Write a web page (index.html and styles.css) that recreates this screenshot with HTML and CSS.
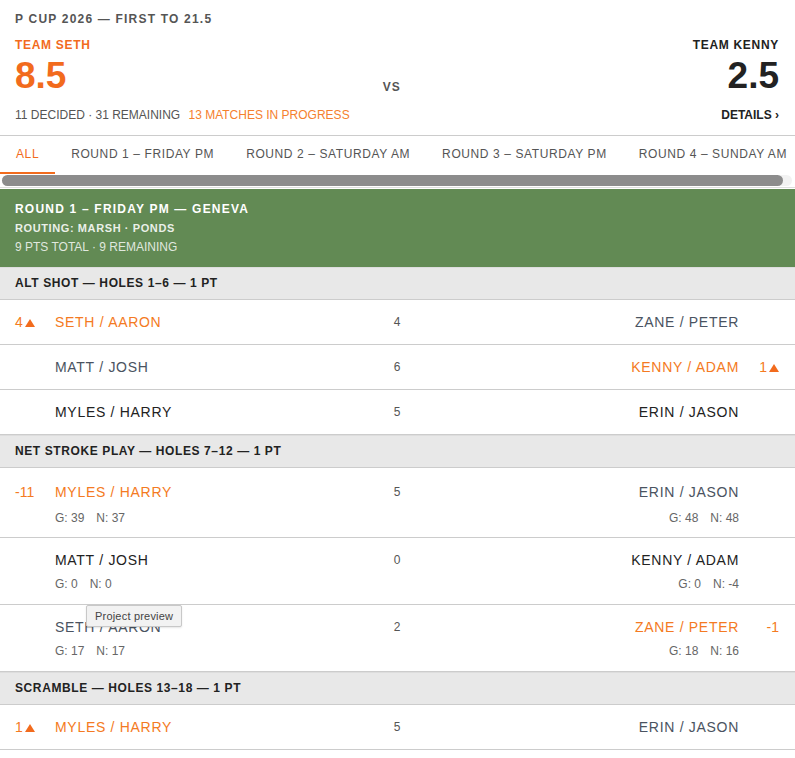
FILE: index.html
```html
<!DOCTYPE html>
<html lang="en">
<head>
    <meta charset="UTF-8">
    <meta name="viewport" content="width=device-width, initial-scale=1.0">
    <title>P Cup 2026</title>
    <link rel="stylesheet" href="styles.css">
</head>
<body>

<!-- Scoreboard -->
<header class="scoreboard">
    <div class="cup-title">P CUP 2026 — FIRST TO 21.5</div>
    <div class="teams">
        <div class="team team-seth">
            <div class="team-name">TEAM SETH</div>
            <div class="team-score">8.5</div>
        </div>
        <div class="vs">VS</div>
        <div class="team team-kenny">
            <div class="team-name">TEAM KENNY</div>
            <div class="team-score">2.5</div>
        </div>
    </div>
    <div class="stats">
        <div>11 DECIDED · 31 REMAINING <span class="live">13 MATCHES IN PROGRESS</span></div>
        <a class="details" href="#">DETAILS ›</a>
    </div>
</header>

<!-- Round tabs -->
<div class="tab-strip">
    <nav class="tabs">
        <a class="tab active" href="#">ALL</a>
        <a class="tab" href="#">ROUND 1 – FRIDAY PM</a>
        <a class="tab" href="#">ROUND 2 – SATURDAY AM</a>
        <a class="tab" href="#">ROUND 3 – SATURDAY PM</a>
        <a class="tab" href="#">ROUND 4 – SUNDAY AM</a>
    </nav>
    <div class="scrollbar"><div class="scroll-thumb"></div></div>
</div>

<section class="round">
    <div class="round-head">
        <div class="round-title">ROUND 1 – FRIDAY PM — GENEVA</div>
        <div class="round-routing">ROUTING: MARSH · PONDS</div>
        <div class="round-points">9 PTS TOTAL · 9 REMAINING</div>
    </div>

    <!-- Alt shot -->
    <div class="format-head">ALT SHOT — HOLES 1–6 — 1 PT</div>
    <div class="match">
        <div class="status lead">4<svg class="up" viewBox="0 0 10 8"><polygon points="5,0 10,8 0,8"/></svg></div>
        <div class="side"><div class="pair lead">SETH / AARON</div></div>
        <div class="holes">4</div>
        <div class="side right"><div class="pair behind">ZANE / PETER</div></div>
        <div class="status right"></div>
    </div>
    <div class="match">
        <div class="status"></div>
        <div class="side"><div class="pair behind">MATT / JOSH</div></div>
        <div class="holes">6</div>
        <div class="side right"><div class="pair lead">KENNY / ADAM</div></div>
        <div class="status right lead">1<svg class="up" viewBox="0 0 10 8"><polygon points="5,0 10,8 0,8"/></svg></div>
    </div>
    <div class="match">
        <div class="status"></div>
        <div class="side"><div class="pair">MYLES / HARRY</div></div>
        <div class="holes">5</div>
        <div class="side right"><div class="pair">ERIN / JASON</div></div>
        <div class="status right"></div>
    </div>

    <!-- Net stroke play -->
    <div class="format-head">NET STROKE PLAY — HOLES 7–12 — 1 PT</div>
    <div class="match stroke">
        <div class="status lead">-11</div>
        <div class="side">
            <div class="pair lead">MYLES / HARRY</div>
            <div class="gross-net"><span>G: 39</span><span>N: 37</span></div>
        </div>
        <div class="holes">5</div>
        <div class="side right">
            <div class="pair behind">ERIN / JASON</div>
            <div class="gross-net"><span>G: 48</span><span>N: 48</span></div>
        </div>
        <div class="status right"></div>
    </div>
    <div class="match stroke">
        <div class="status"></div>
        <div class="side">
            <div class="pair">MATT / JOSH</div>
            <div class="gross-net"><span>G: 0</span><span>N: 0</span></div>
        </div>
        <div class="holes">0</div>
        <div class="side right">
            <div class="pair">KENNY / ADAM</div>
            <div class="gross-net"><span>G: 0</span><span>N: -4</span></div>
        </div>
        <div class="status right"></div>
    </div>
    <div class="match stroke">
        <div class="tooltip">Project preview</div>
        <div class="status"></div>
        <div class="side">
            <div class="pair behind">SETH / AARON</div>
            <div class="gross-net"><span>G: 17</span><span>N: 17</span></div>
        </div>
        <div class="holes">2</div>
        <div class="side right">
            <div class="pair lead">ZANE / PETER</div>
            <div class="gross-net"><span>G: 18</span><span>N: 16</span></div>
        </div>
        <div class="status right lead">-1</div>
    </div>

    <!-- Scramble -->
    <div class="format-head">SCRAMBLE — HOLES 13–18 — 1 PT</div>
    <div class="match">
        <div class="status lead">1<svg class="up" viewBox="0 0 10 8"><polygon points="5,0 10,8 0,8"/></svg></div>
        <div class="side"><div class="pair lead">MYLES / HARRY</div></div>
        <div class="holes">5</div>
        <div class="side right"><div class="pair behind">ERIN / JASON</div></div>
        <div class="status right"></div>
    </div>
</section>

</body>
</html>
```

FILE: styles.css
```css
body {
    font-family: "Liberation Sans", Arial, sans-serif;
    background-color: #fff;
    color: #222;
    margin: 0;
    padding: 0;
}
a {
    text-decoration: none;
    color: inherit;
}

/* scoreboard */
.scoreboard {
    padding: 12px 16px 13px 15px;
    border-bottom: 1px solid #ccc;
}
.cup-title {
    font-size: 12px;
    line-height: 14px;
    font-weight: bold;
    letter-spacing: 1.2px;
    color: #555;
}
.teams {
    display: flex;
    justify-content: space-between;
    margin-top: 12px;
}
.team-name {
    font-size: 12px;
    line-height: 14px;
    font-weight: bold;
    letter-spacing: 0.7px;
}
.team-score {
    margin-top: 3px;
    font-size: 37px;
    line-height: 42px;
    font-weight: bold;
}
.team-seth {
    color: #f26b1d;
}
.team-kenny {
    color: #222;
    text-align: right;
}
.vs {
    align-self: flex-end;
    padding-bottom: 3px;
    font-size: 12px;
    line-height: 14px;
    font-weight: bold;
    letter-spacing: 1px;
    color: #555;
}
.stats {
    display: flex;
    justify-content: space-between;
    margin-top: 11px;
    font-size: 12px;
    line-height: 14px;
    color: #555;
}
.stats .live {
    color: #f5802e;
    margin-left: 5px;
}
.details {
    font-weight: bold;
    color: #222;
}

/* tabs */
.tab-strip {
    border-bottom: 1px solid #ddd;
    margin-bottom: 1px;
}
.tabs {
    display: flex;
    overflow-x: auto;
    white-space: nowrap;
    scrollbar-width: none;
}
.tabs::-webkit-scrollbar {
    display: none;
}
.tab {
    flex: none;
    padding: 11px 16px;
    font-size: 12px;
    line-height: 14px;
    letter-spacing: 0.6px;
    color: #555;
    border-bottom: 2px solid transparent;
}
.tab.active {
    color: #f26b1d;
    border-bottom-color: #f26b1d;
}
.scrollbar {
    height: 11px;
    margin: 1px 3px 1px 2px;
    background: #f2f2f2;
    border-radius: 6px;
}
.scroll-thumb {
    width: 98.8%;
    height: 100%;
    background: #8c8c8c;
    border-radius: 6px;
}

/* round */
.round-head {
    background-color: #628a54;
    color: #fff;
    padding: 13px 15px;
}
.round-title {
    font-size: 12px;
    line-height: 14px;
    font-weight: bold;
    letter-spacing: 1.2px;
}
.round-routing {
    margin-top: 5px;
    font-size: 11px;
    line-height: 14px;
    font-weight: bold;
    letter-spacing: 0.6px;
    color: rgba(255, 255, 255, 0.88);
}
.round-points {
    margin-top: 5px;
    font-size: 12px;
    line-height: 14px;
    color: rgba(255, 255, 255, 0.82);
}
.format-head {
    background-color: #e8e8e8;
    border-top: 1px solid #ddd;
    border-bottom: 1px solid #ccc;
    padding: 8px 15px 9px;
    font-size: 12px;
    line-height: 14px;
    font-weight: bold;
    letter-spacing: 0.6px;
    color: #222;
}

/* match rows */
.match {
    position: relative;
    display: grid;
    grid-template-columns: 40px 1fr auto 1fr 40px;
    align-items: start;
    padding: 13px 16px 13px 15px;
    border-bottom: 1px solid #ccc;
}
.match.stroke {
    padding-top: 13px;
    padding-bottom: 13px;
}
.format-head + .match.stroke {
    padding-top: 15px;
    padding-bottom: 12px;
}
.format-head + .match.stroke .gross-net {
    margin-top: 10px;
}
.status {
    font-size: 14px;
    line-height: 18px;
    color: #222;
}
.status.right {
    text-align: right;
}
.status .up {
    width: 10px;
    height: 8px;
    margin-left: 2px;
    fill: #f26b1d;
}
.side.right {
    text-align: right;
}
.pair {
    font-size: 14px;
    line-height: 18px;
    letter-spacing: 0.7px;
    color: #222;
}
.lead {
    color: #f47a22;
}
.pair.behind {
    color: #4a5361;
}
.holes {
    font-size: 12px;
    line-height: 18px;
    color: #555;
}
.gross-net {
    margin-top: 8px;
    font-size: 12px;
    line-height: 14px;
    color: #666;
}
.gross-net span + span {
    margin-left: 12px;
}
.tooltip {
    position: absolute;
    top: 0;
    left: 86px;
    padding: 3px 8px;
    font-size: 11px;
    line-height: 14px;
    letter-spacing: 0.2px;
    color: #444;
    background: #f2f2f2;
    border: 1px solid #c8c8c8;
    border-radius: 2px;
    box-shadow: 0 1px 2px rgba(0, 0, 0, 0.1);
}
```
